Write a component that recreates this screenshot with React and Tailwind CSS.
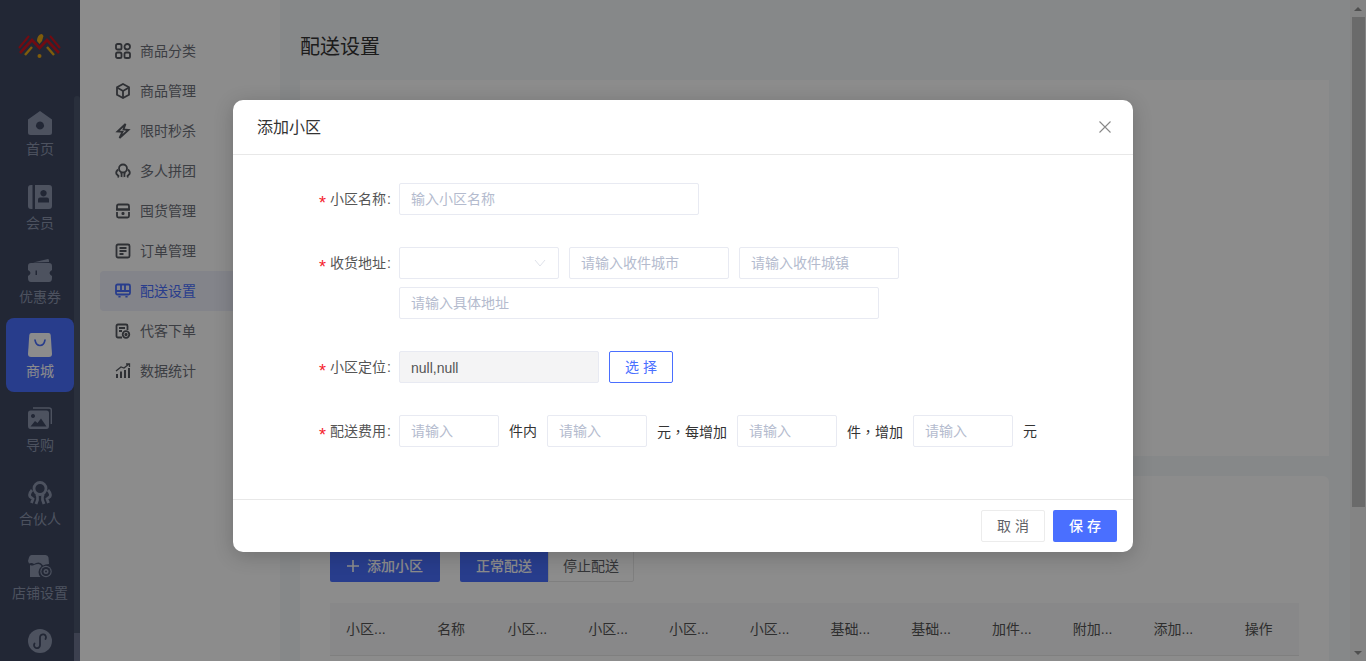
import React from 'react';

const Logo = () => (
  <svg width="46" height="34" viewBox="0 0 46 34" fill="none">
    <path d="M8 26 L15 18 M37 26 L30 18" stroke="#e8a814" strokeWidth="2.4" />
    <path d="M20 12 C20 8 22 5 25 5 L26.5 7 L25 12 L22.5 15 Z" fill="#e8a814" />
    <path d="M3 24 L15 11 L22.5 19 L30 11 L42 24" stroke="#cf1520" strokeWidth="2.6" />
    <path d="M2 19 L12 7 M43 19 L33 7" stroke="#cf1520" strokeWidth="2" />
    <circle cx="22.5" cy="27" r="2" fill="#e8a814" />
  </svg>
);

const HomeIcon = () => (
  <svg width="24" height="24" viewBox="0 0 24 24" fill="currentColor">
    <path fillRule="evenodd" d="M12 0 L24 8.5 V21.5 Q24 24 21.5 24 H2.5 Q0 24 0 21.5 V8.5 Z M12 10.5 a4 4 0 1 0 .01 0 Z" />
  </svg>
);
const MemberIcon = () => (
  <svg width="24" height="24" viewBox="0 0 24 24" fill="currentColor">
    <path d="M4.5 0 V24 H3 Q0 24 0 21 V3 Q0 0 3 0 Z" />
    <path fillRule="evenodd" d="M7 0 H21 Q24 0 24 3 V21 Q24 24 21 24 H7 Z M15.5 5 a3.2 3.2 0 1 0 .01 0 Z M10 17.5 H21 V14.5 Q21 12.5 19 12.5 H12 Q10 12.5 10 14.5 Z" />
  </svg>
);
const CouponIcon = () => (
  <svg width="24" height="24" viewBox="0 0 24 24" fill="currentColor">
    <path d="M5 3.5 L20 0 Q21 0 21 1.5 V3 Z" />
    <path fillRule="evenodd" d="M3 4 H21 Q24 4 24 7 V11 Q21.5 12.5 21.5 14 Q21.5 15.5 24 17 V19 Q24 23 21 23 H3 Q0 23 0 19 V17 Q2.5 15.5 2.5 14 Q2.5 12.5 0 11 V7 Q0 4 3 4 Z M7.5 11.5 V16 H9 V11.5 Z" />
  </svg>
);
const BagIcon = () => (
  <svg width="24" height="24" viewBox="0 0 24 24" fill="none">
    <path d="M3.5 0 H20.5 Q22.5 0 22.7 2 L24 21 Q24 24 21 24 H3 Q0 24 0 21 L1.3 2 Q1.5 0 3.5 0 Z" fill="currentColor" />
    <path d="M7 7 Q8 12.5 12 12.5 Q16 12.5 17 7" stroke="#4a6fff" strokeWidth="1.6" strokeLinecap="round" />
  </svg>
);
const ImageIcon = () => (
  <svg width="24" height="24" viewBox="0 0 24 24" fill="none">
    <path d="M5 1 H21 Q23.3 1 23.3 3 V17" stroke="currentColor" strokeWidth="1.4" />
    <path fillRule="evenodd" d="M2.5 3.5 H18.5 Q21 3.5 21 6 V19 Q21 22 18.5 22 H2.5 Q0 22 0 19 V6 Q0 3.5 2.5 3.5 Z M5 7 a2 2 0 1 0 .01 0 Z M2.5 19.5 H18.5 L13 11.5 L9.5 16 L7 14 Z" fill="currentColor" />
  </svg>
);
const PartnerIcon = ({ size = 24, w = 2.8 }) => (
  <svg width={size} height={size} viewBox="0 0 24 24" fill="none" stroke="currentColor" strokeWidth={w}>
    <circle cx="12" cy="7.5" r="6" />
    <path d="M8.5 13 Q10 15 9.5 19 L8 23 M15.5 13 Q14 15 14.5 19 L16 23" />
    <path d="M4 9 Q0.5 13 2 15.5 L5 18 L3.5 22 M20 9 Q23.5 13 22 15.5 L19 18 L20.5 22" />
  </svg>
);
const StoreGearIcon = () => (
  <svg width="24" height="24" viewBox="0 0 24 24" fill="currentColor">
    <path d="M3.5 0 H17.5 Q20 0 20.5 2.5 L21 9 Q17 9 15 10.5 Q13 7.5 10.5 7.5 Q8 7.5 6 9 Q4 7.5 1 8.5 L0 6 L1 2.5 Q1.5 0 3.5 0 Z" />
    <path d="M2 10 Q4 11 6 10 Q8 9 10.5 9 Q12 9 13.5 11 Q10.5 14 10.5 17 Q10.5 20 12.5 22 H2 Z" />
    <circle cx="18" cy="16.5" r="5.7" />
    <circle cx="18" cy="16.5" r="4.6" fill="#3e4762" />
    <circle cx="18" cy="16.5" r="2.5" fill="currentColor" />
    <circle cx="18" cy="16.5" r="1" fill="#3e4762" />
  </svg>
);
const LinkIcon = () => (
  <svg width="24" height="24" viewBox="0 0 24 24" fill="none">
    <circle cx="12" cy="12" r="12" fill="currentColor" />
    <path d="M6.5 14.5 a3 3 0 1 0 5.5 1.5 V8.5 a3 3 0 1 1 5.5 1.5" stroke="#3e4762" strokeWidth="1.8" strokeLinecap="round" />
  </svg>
);

const line = { fill: 'none', stroke: 'currentColor', strokeWidth: 1.8 };
const sub = {
  grid: <g {...line}><rect x="1" y="1" width="5.5" height="5.5" rx="1.6" /><rect x="9.5" y="1" width="5.5" height="5.5" rx="2.7" /><rect x="1" y="9.5" width="5.5" height="5.5" rx="1.6" /><rect x="9.5" y="9.5" width="5.5" height="5.5" rx="1.6" /></g>,
  box: <g {...line}><path d="M8 1 L14 4.3 V11.7 L8 15 L2 11.7 V4.3 Z" /><path d="M2.5 4.8 L8 8 L13.5 4.8 M8 8 V14.5" /></g>,
  bolt: <path d="M10.5 1 L2.5 8.5 L7.5 8.8 L4.5 15 L13.5 7 L8.5 6.5 Z" {...line} />,
  partner: <g {...line}><circle cx="8" cy="5.5" r="4" /><path d="M6 9 Q7 11 6.5 14 M10 9 Q9 11 9.5 14" /><path d="M3 6.5 Q0.5 9 1.5 11 L3.5 13 L3 14.5 M13 6.5 Q15.5 9 14.5 11 L12.5 13 L13 14.5" /></g>,
  store: <g {...line}><path d="M2 6.5 V3 Q2 1.5 3.5 1.5 H12.5 Q14 1.5 14 3 V6.5 H2 Z" /><path d="M1 6.5 H15 M2 9 V13 Q2 14.5 3.5 14.5 H12.5 Q14 14.5 14 13 V9" /><path d="M6.5 10.5 H9.5 M8 9 V12" /></g>,
  order: <g {...line}><rect x="1.5" y="1.5" width="13" height="13" rx="1.5" /><path d="M4.5 5 H11.5 M4.5 8 H11.5 M4.5 11 H8.5" /></g>,
  bus: <g {...line}><rect x="1" y="1.5" width="14" height="10" rx="1.5" /><path d="M6 2 V8 H10 V2 M1 8 H15" /><path d="M4.5 13 v1.5 M11.5 13 v1.5" strokeWidth="2.2" /></g>,
  place: <g {...line}><path d="M7 14.5 H3 Q1.5 14.5 1.5 13 V3 Q1.5 1.5 3 1.5 H11 Q12.5 1.5 12.5 3 V7" /><path d="M4 5 H10 M4 8 H7" /><circle cx="11" cy="11.5" r="3.3" /><path d="M11 10 V13 M9.5 11.5 H12.5" /></g>,
  chart: <g fill="none" stroke="currentColor"><path d="M2 15 V11 M6 15 V8.5 M10 15 V7 M14 15 V5" strokeWidth="2" /><path d="M1 8 L6 4 L9 5 L14 1 M11 1 H14.5 V4" strokeWidth="1.3" /></g>,
};

const rail = [
  { label: '首页', icon: <HomeIcon /> },
  { label: '会员', icon: <MemberIcon /> },
  { label: '优惠券', icon: <CouponIcon /> },
  { label: '商城', icon: <BagIcon />, active: true },
  { label: '导购', icon: <ImageIcon /> },
  { label: '合伙人', icon: <PartnerIcon /> },
  { label: '店铺设置', icon: <StoreGearIcon /> },
  { label: '', icon: <LinkIcon /> },
];

const menu = [
  { label: '商品分类', icon: sub.grid },
  { label: '商品管理', icon: sub.box },
  { label: '限时秒杀', icon: sub.bolt },
  { label: '多人拼团', icon: sub.partner },
  { label: '囤货管理', icon: sub.store },
  { label: '订单管理', icon: sub.order },
  { label: '配送设置', icon: sub.bus, active: true },
  { label: '代客下单', icon: sub.place },
  { label: '数据统计', icon: sub.chart },
];

const columns = ['小区...', '名称', '小区...', '小区...', '小区...', '小区...', '基础...', '基础...', '加件...', '附加...', '添加...', '操作'];

const Label = ({ children }) => (
  <div className="w-[166px] shrink-0 h-8 flex items-center justify-end pr-2 text-sm text-[#555555]">
    <span className="text-[#f5222d] mr-1 text-[18px] leading-none pt-2">*</span>
    {children}
    <span className="ml-px">:</span>
  </div>
);

const Field = ({ placeholder, className }) => (
  <input
    placeholder={placeholder}
    className={`h-8 px-[11px] text-sm border border-[#e8eaf2] rounded-[2px] bg-white outline-none placeholder:text-[#b4bbce] ${className}`}
  />
);

export default function App() {
  return (
    <div className="relative h-screen flex overflow-hidden bg-[#f5f7fa] text-[#606266] font-['Liberation_Sans','Noto_Sans_CJK_SC',sans-serif]">
      <aside className="w-20 shrink-0 bg-[#3e4762] flex flex-col">
        <div className="h-24 shrink-0 flex items-start justify-center pt-[29px]">
          <Logo />
        </div>
        <div className="flex flex-1 min-h-0">
          <nav className="w-[74px] pl-1.5 flex flex-col">
            {rail.map((item, i) => (
              <div
                key={i}
                className={`h-[74px] shrink-0 pt-[15px] flex flex-col items-center rounded-lg ${item.active ? 'bg-[#4a6fff] text-white' : 'text-[#8c96ad]'}`}
              >
                {item.icon}
                <span className="mt-1 text-sm leading-5 whitespace-nowrap">{item.label}</span>
              </div>
            ))}
          </nav>
          <div className="w-1.5 bg-[#4c566d] rounded-t-sm flex flex-col justify-end">
            <div className="h-7 bg-[#6d7691]" />
          </div>
        </div>
      </aside>

      <div className="w-[200px] shrink-0 bg-white pt-[31px] pl-5">
        {menu.map((item) => (
          <div
            key={item.label}
            className={`h-10 w-[160px] flex items-center gap-[9px] pl-[15px] rounded-l-sm text-sm ${item.active ? 'bg-[#eef0fb] text-[#4a6fff]' : 'text-[#6e717a]'}`}
          >
            <svg width="16" height="16" viewBox="0 0 16 16" className={`shrink-0 ${item.active ? 'text-[#4a6fff]' : 'text-[#55585f]'}`}>{item.icon}</svg>
            {item.label}
          </div>
        ))}
      </div>

      <main className="flex-1 min-w-0 pl-5 pr-[21px]">
        <h1 className="h-20 pt-[32px] text-xl leading-[30px] text-[#333333]">配送设置</h1>
        <div className="h-[376px] bg-white" />
        <div className="mt-5 h-[300px] bg-white rounded-t-md px-[30px] pt-[74px]">
          <div className="flex">
            <button className="w-[110px] h-8 mr-5 flex items-center justify-center gap-2 bg-[#4a6fff] text-white rounded-[2px] text-sm font-medium">
              <svg width="12" height="12" viewBox="0 0 12 12" stroke="currentColor" strokeWidth="1.6"><path d="M6 0 V12 M0 6 H12" /></svg>
              添加小区
            </button>
            <button className="w-[88px] h-8 bg-[#4a6fff] text-white rounded-l-[2px] text-sm font-medium">正常配送</button>
            <button className="w-[86px] h-8 border border-[#e8e8e8] text-[#606266] rounded-r-[2px] text-sm">停止配送</button>
          </div>
          <div className="mt-[21px] h-[53px] grid grid-cols-12 items-center bg-[#f8f8f9] border-b border-[#e8e8e8] text-sm text-[#555555]">
            {columns.map((c, i) => (
              <div key={i} className={`whitespace-nowrap ${c.endsWith('...') ? 'pl-4 text-left' : 'text-center'}`}>{c}</div>
            ))}
          </div>
        </div>
      </main>

      <div className="w-4 shrink-0 bg-[#f1f1f1] flex flex-col items-center">
        <div className="h-[17px] shrink-0 flex items-center justify-center">
          <div className="w-0 h-0 border-x-4 border-x-transparent border-b-4 border-b-[#909090]" />
        </div>
        <div className="w-[13px] h-[490px] bg-[#c1c1c1]" />
        <div className="flex-1" />
        <div className="h-[17px] shrink-0 flex items-center justify-center">
          <div className="w-0 h-0 border-x-4 border-x-transparent border-t-4 border-t-[#909090]" />
        </div>
      </div>

      <div className="absolute inset-0 bg-black/45" />

      <div className="absolute inset-0 flex justify-center items-start pt-[100px]">
        <div className="w-[900px] h-[452px] bg-white rounded-[10px] flex flex-col shadow-[0_4px_20px_rgba(0,0,0,0.2)]">
          <div className="h-[55px] shrink-0 flex items-center justify-between pl-6 pr-[22px] border-b border-[#e8e8e8]">
            <span className="text-base text-[#333333] pt-0.5">添加小区</span>
            <svg width="12" height="12" viewBox="0 0 12 12" stroke="#888888" strokeWidth="1.1"><path d="M0.5 0.5 L11.5 11.5 M11.5 0.5 L0.5 11.5" /></svg>
          </div>

          <div className="flex-1 pt-7 flex flex-col gap-8">
            <div className="flex">
              <Label>小区名称</Label>
              <Field placeholder="输入小区名称" className="w-[300px]" />
            </div>

            <div className="flex">
              <Label>收货地址</Label>
              <div className="flex flex-col gap-2">
                <div className="flex gap-[10px]">
                  <div className="w-40 h-8 flex items-center justify-end pr-3 border border-[#e8eaf2] rounded-[2px]">
                    <svg width="12" height="8" viewBox="0 0 12 8" fill="none" stroke="#dfe2ea" strokeWidth="1"><path d="M1 1 L6 7 L11 1" /></svg>
                  </div>
                  <Field placeholder="请输入收件城市" className="w-40" />
                  <Field placeholder="请输入收件城镇" className="w-40" />
                </div>
                <Field placeholder="请输入具体地址" className="w-[480px]" />
              </div>
            </div>

            <div className="flex">
              <Label>小区定位</Label>
              <div className="w-[200px] h-8 flex items-center px-[11px] pt-0.5 text-sm bg-[#f4f4f5] border border-[#e8eaf2] rounded-[2px] text-[#555555]">null,null</div>
              <button className="ml-[10px] w-16 h-8 border border-[#4a6fff] rounded-[2px] text-[#4a6fff] text-sm">选 择</button>
            </div>

            <div className="flex items-center text-sm text-[#333333]">
              <Label>配送费用</Label>
              <Field placeholder="请输入" className="w-[100px]" />
              <span className="mx-[10px]">件内</span>
              <Field placeholder="请输入" className="w-[100px]" />
              <span className="mx-[10px] font-['Noto_Sans_CJK_TC',sans-serif]">元，每增加</span>
              <Field placeholder="请输入" className="w-[100px]" />
              <span className="mx-[10px] font-['Noto_Sans_CJK_TC',sans-serif]">件，增加</span>
              <Field placeholder="请输入" className="w-[100px]" />
              <span className="mx-[10px]">元</span>
            </div>
          </div>

          <div className="h-[53px] shrink-0 border-t border-[#e8e8e8] flex items-center justify-end gap-2 pr-4">
            <button className="w-16 h-8 border border-[#ececec] rounded-[2px] text-sm text-[#606266]">取 消</button>
            <button className="w-16 h-8 bg-[#4a6fff] rounded-[2px] text-sm font-medium text-white">保 存</button>
          </div>
        </div>
      </div>
    </div>
  );
}
